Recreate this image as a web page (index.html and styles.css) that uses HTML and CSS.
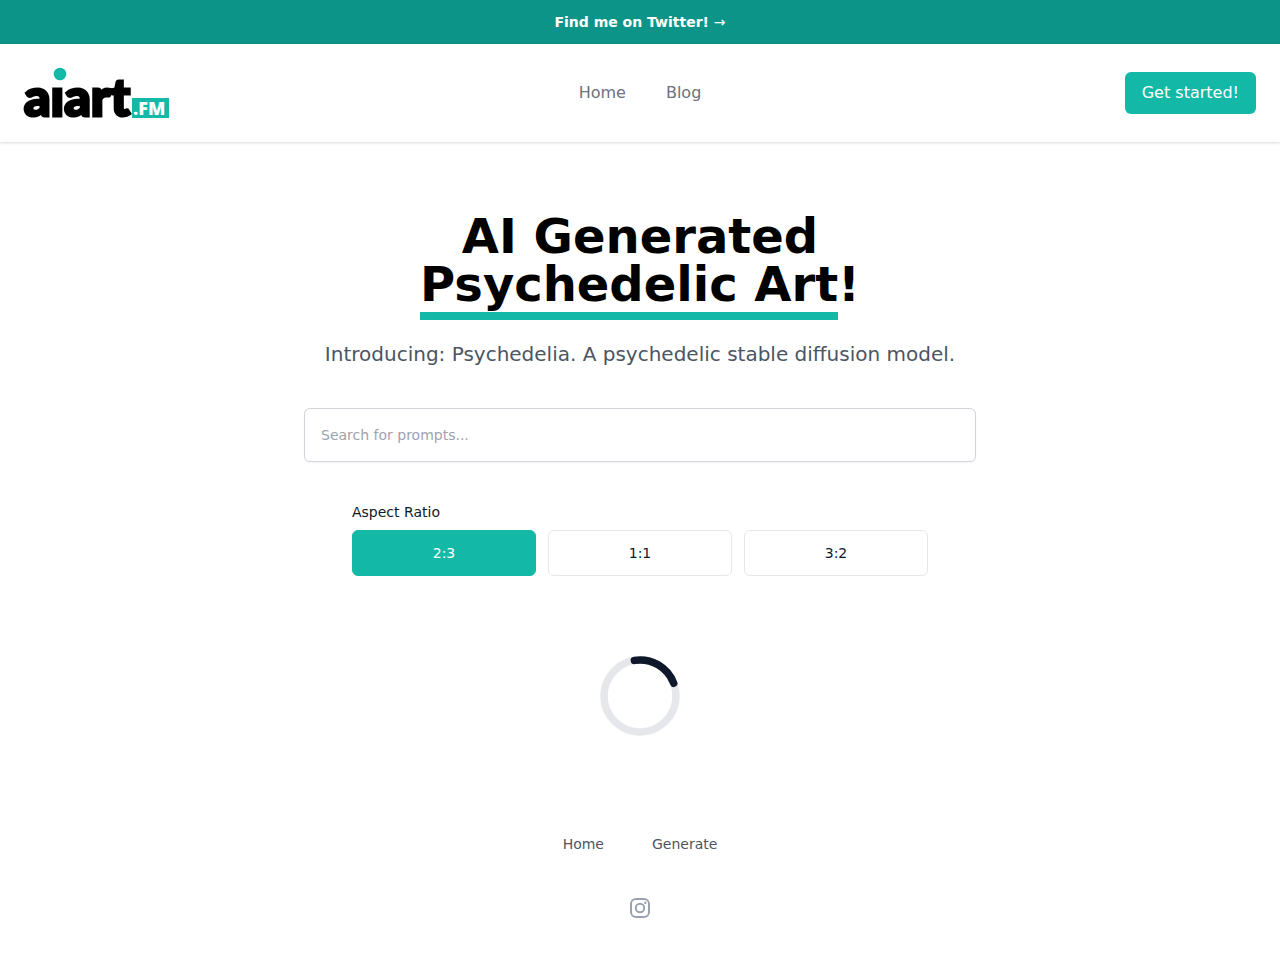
FILE: index.html
```html
<!DOCTYPE html>
<html lang="en">
<head>
  <meta charset="UTF-8">
  <meta name="viewport" content="width=device-width, initial-scale=1.0">
  <title>aiart.fm - AI Generated Psychedelic Art</title>
  <link rel="stylesheet" href="styles.css">
</head>
<body>
  <a class="banner" href="#">Find me on Twitter! <span class="arrow">→</span></a>

  <header class="header">
    <div class="header-side">
      <a class="logo" href="#" aria-label="aiart.fm">
        <svg width="146" height="50" viewBox="0 0 146 50" aria-hidden="true">
          <text class="logo-word" x="0" y="48">aıart</text>
          <circle cx="36" cy="6" r="6.3" fill="#14b8a6"/>
          <rect x="108" y="30" width="37" height="20" fill="#14b8a6"/>
          <text class="logo-fm" x="109" y="47">.FM</text>
        </svg>
      </a>
    </div>
    <nav class="nav">
      <a href="#">Home</a>
      <a href="#">Blog</a>
    </nav>
    <div class="header-side header-end">
      <button class="start-btn" type="button">Get started!</button>
    </div>
  </header>

  <main class="main">
    <h1 class="title">AI Generated<br><span class="underlined">Psychedelic Art</span>!</h1>
    <p class="subtitle">Introducing: Psychedelia. A psychedelic stable diffusion model.</p>

    <input class="search" type="text" placeholder="Search for prompts..." aria-label="Search for prompts">

    <fieldset class="ratios">
      <legend>Aspect Ratio</legend>
      <div class="ratio-list">
        <button class="ratio active" type="button">2:3</button>
        <button class="ratio" type="button">1:1</button>
        <button class="ratio" type="button">3:2</button>
      </div>
    </fieldset>

    <svg class="spinner" viewBox="0 0 80 80" fill="none" stroke-width="7.5" role="img" aria-label="Loading">
      <circle cx="40" cy="40" r="36" stroke="#e5e7eb"/>
      <path d="M34.4 4.4A36 36 0 0 1 73.7 27.3" stroke="#0f172a" stroke-linecap="round"/>
    </svg>
  </main>

  <footer class="footer">
    <nav class="footer-nav">
      <a href="#">Home</a>
      <a href="#">Generate</a>
    </nav>
    <a class="social" href="#" aria-label="Instagram">
      <svg width="24" height="24" viewBox="0 0 24 24" fill="none" stroke="#9ca3af" stroke-width="2" aria-hidden="true">
        <rect x="3" y="3" width="18" height="18" rx="5"/>
        <circle cx="12" cy="12" r="4.2"/>
        <circle cx="17.3" cy="6.7" r="1.2" fill="#9ca3af" stroke="none"/>
      </svg>
    </a>
  </footer>
</body>
</html>
```
FILE: styles.css
```css
* {
  box-sizing: border-box;
}
body {
  font-family: "DejaVu Sans", sans-serif;
  font-size: 16px;
  line-height: 24px;
  background: #fff;
  color: #111827;
  margin: 0;
}
a {
  text-decoration: none;
}
button, input {
  font-family: inherit;
}
.banner {
  display: block;
  background: #0d9488;
  color: #fff;
  font-size: 14px;
  font-weight: bold;
  line-height: 20px;
  padding: 12px;
  text-align: center;
}
.arrow {
  font-weight: normal;
}

/* header */
.header {
  display: flex;
  align-items: center;
  padding: 24px;
  box-shadow: 0 1px 3px rgba(0,0,0,0.1), 0 1px 2px rgba(0,0,0,0.06);
}
.header-side {
  flex: 1;
  display: flex;
}
.header-end {
  justify-content: flex-end;
}
.logo, .logo svg {
  display: block;
  overflow: visible;
}
.logo-word {
  font-family: Lato, "Liberation Sans", sans-serif;
  font-size: 52px;
  font-weight: 900;
  fill: #000;
  stroke: #000;
  stroke-width: 3px;
}
.logo-fm {
  font-family: "Open Sans", sans-serif;
  font-size: 18px;
  font-weight: 800;
  fill: #fff;
}
.nav {
  display: flex;
  gap: 40px;
}
.nav a {
  color: #6b7280;
}
.start-btn {
  background: #14b8a6;
  color: #fff;
  font-size: 16px;
  line-height: 24px;
  padding: 8px 16px;
  border: 1px solid transparent;
  border-radius: 6px;
}

/* generator */
.main {
  display: flex;
  flex-direction: column;
  align-items: center;
  padding: 70px 24px 64px;
}
.title {
  margin: 0;
  color: #000;
  font-size: 48px;
  line-height: 48px;
  text-align: center;
}
.underlined {
  border-bottom: 8px solid #14b8a6;
}
.subtitle {
  margin: 32px 0 40px;
  color: #4b5563;
  font-size: 20px;
  line-height: 28px;
  text-align: center;
}
.search {
  width: 100%;
  max-width: 672px;
  padding: 16px;
  border: 1px solid #d1d5db;
  border-radius: 6px;
  box-shadow: 0 1px 2px rgba(0,0,0,0.05);
  font-size: 14px;
  line-height: 20px;
}
.search::placeholder {
  color: #9ca3af;
}
.ratios {
  width: 100%;
  max-width: 576px;
  margin: 40px 0 80px;
  padding: 0;
  border: 0;
  font-size: 14px;
  line-height: 20px;
}
.ratios legend {
  padding: 0;
}
.ratio-list {
  display: grid;
  grid-template-columns: repeat(3, 1fr);
  gap: 12px;
  margin-top: 8px;
}
.ratio {
  padding: 12px;
  background: #fff;
  color: #111827;
  border: 1px solid #e5e7eb;
  border-radius: 6px;
  font-size: 14px;
  line-height: 20px;
}
.ratio.active {
  background: #14b8a6;
  border-color: #14b8a6;
  color: #fff;
}
.spinner {
  width: 80px;
  height: 80px;
}

/* footer */
.footer {
  display: flex;
  flex-direction: column;
  align-items: center;
  gap: 42px;
  padding: 34px 24px 40px;
}
.footer-nav {
  display: flex;
  gap: 48px;
  font-size: 14px;
  line-height: 20px;
}
.footer-nav a {
  color: #4b5563;
}
.social svg {
  display: block;
}
```
